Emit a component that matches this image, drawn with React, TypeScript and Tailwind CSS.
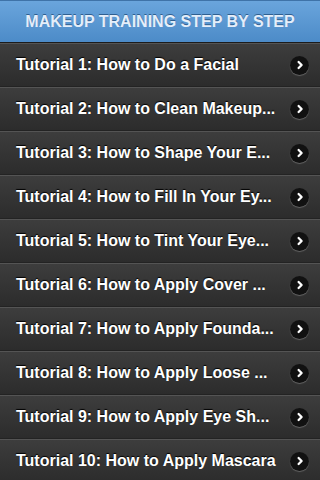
const tutorials = [
  "Tutorial 1: How to Do a Facial",
  "Tutorial 2: How to Clean Makeup...",
  "Tutorial 3: How to Shape Your E...",
  "Tutorial 4: How to Fill In Your Ey...",
  "Tutorial 5: How to Tint Your Eye...",
  "Tutorial 6: How to Apply Cover ...",
  "Tutorial 7: How to Apply Founda...",
  "Tutorial 8: How to Apply Loose ...",
  "Tutorial 9: How to Apply Eye Sh...",
  "Tutorial 10: How to Apply Mascara",
];

function Chevron() {
  return (
    <div className="w-[19px] h-[19px] rounded-full bg-[#111] flex items-center justify-center shadow-[0_1px_1px_rgba(255,255,255,0.25)] shrink-0">
      <svg width="10" height="10" viewBox="0 0 10 10">
        <path d="M3.6 2 L6.6 5 L3.6 8" fill="none" stroke="#fff" strokeWidth="2.3" strokeLinecap="round" strokeLinejoin="round" />
      </svg>
    </div>
  );
}

export default function App() {
  return (
    <div className="w-[320px] h-[480px] overflow-hidden bg-[#2b2b2b] font-['Liberation_Sans',Arial,sans-serif]">
      <div className="h-[43px] border-t border-[#3f73a8] border-b border-b-[#1c1c1c] bg-gradient-to-b from-[#6aa5dc] to-[#4c8bc8] flex items-center justify-center">
        <h1 className="text-[16px] font-bold text-[#e4eefa] [text-shadow:0_-1px_0_#2f5f90]">
          MAKEUP TRAINING STEP BY STEP
        </h1>
      </div>
      {tutorials.map((t) => (
        <div
          key={t}
          className="h-[44px] border-t border-[#545454] border-b border-b-[#232323] bg-gradient-to-b from-[#3d3d3d] to-[#2c2c2c] flex items-center pl-4 pr-[11px]"
        >
          <span className="flex-1 min-w-0 whitespace-nowrap pr-2 text-[16px] font-bold text-white [text-shadow:0_-1px_1px_#000]">
            {t}
          </span>
          <Chevron />
        </div>
      ))}
    </div>
  );
}
